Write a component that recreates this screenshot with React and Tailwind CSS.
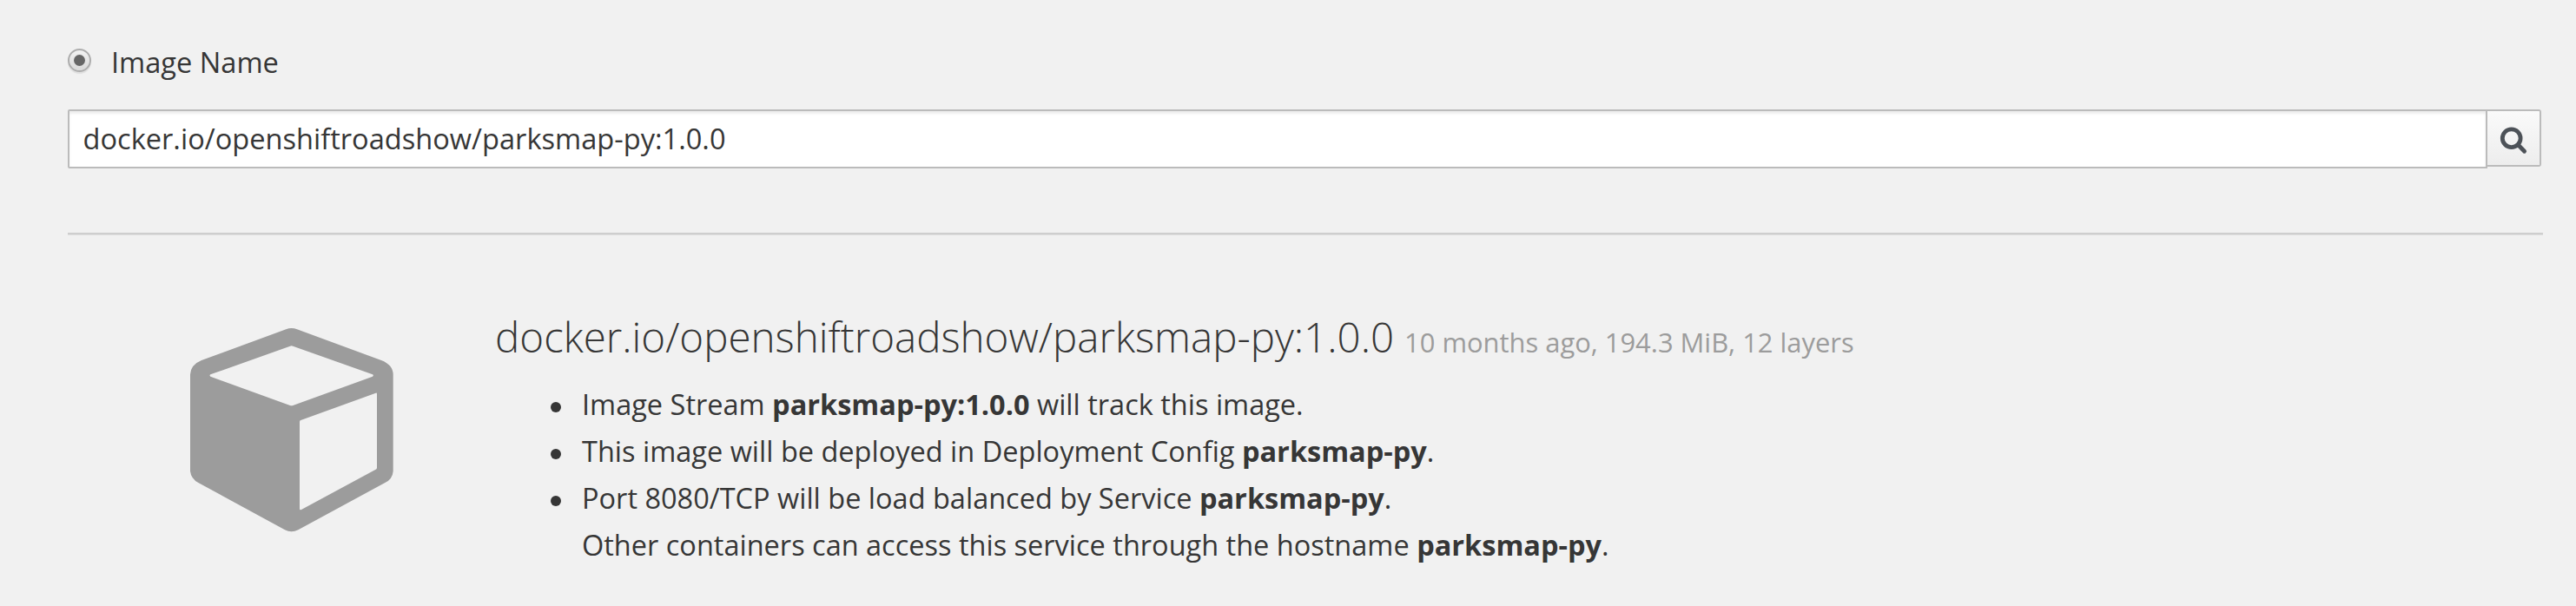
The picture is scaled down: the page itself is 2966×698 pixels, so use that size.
function SearchIcon() {
  return (
    <svg className="block h-[34px] w-[34px]" viewBox="0 0 34 34" fill="none" stroke="#4d5258">
      <circle cx="14.7" cy="14.2" r="10.4" strokeWidth="4.8" />
      <path d="M22.8 22.3 L29.6 29.2" strokeWidth="4.8" strokeLinecap="round" />
    </svg>
  );
}

function CubeIcon() {
  return (
    <svg className="block h-[235px] w-[234px]" viewBox="87 83 702 705">
      <path
        fill="#9c9c9c"
        fillRule="evenodd"
        d="M418 87 Q437 79 456 87 L747 194 Q787 209 788 243 L788 577 Q786 604 760 617 L460 780 Q437 792 414 780 L115 617 Q90 603 87 577 L87 243 Q89 209 126 194 Z
           M432 145 L157 243 Q152 246 157 250 L432 350 Q437 352 442 350 L717 250 Q722 246 717 243 L442 145 Q437 143 432 145 Z
           M469 401 L728 307 Q732 306 732 310 L732 565 Q732 569 728 571 L471 710 Q465 713 465 707 L465 406 Q465 402 469 401 Z"
      />
    </svg>
  );
}

function Item({ bullet = true, children }) {
  return (
    <li className="flex h-[54px] items-center">
      <span className="flex w-[36px] shrink-0 pt-[5px]">
        {bullet && <span className="h-3 w-3 rounded-full bg-[#363636]" />}
      </span>
      <span className="whitespace-pre">{children}</span>
    </li>
  );
}

export default function App() {
  return (
    <main className="h-[698px] w-[2966px] overflow-hidden bg-[#f1f1f1] pt-[45px] pl-[78px] font-['Open_Sans',sans-serif] text-[32.6px] leading-[54px] text-[#363636]">
      <label className="flex h-[54px] items-start">
        <span className="mt-[11px] flex h-[27px] w-[27px] items-center justify-center rounded-full border-[2.5px] border-[#adadad] bg-linear-to-b from-[#f3f3f3] to-[#d9d9d9] shadow-[0_2px_1px_rgba(0,0,0,0.08)]">
          <span className="h-[13px] w-[13px] rounded-full bg-[#666]" />
        </span>
        <span className="ml-[23px]">Image Name</span>
      </label>

      <div className="mt-[27px] flex h-[68px] items-start">
        <div className="flex h-[68px] w-[2786px] items-center rounded-l-[2px] border-2 border-[#bbb] bg-white pl-[15.5px] shadow-[inset_0_3px_3px_rgba(3,3,3,0.075)]">
          <span>docker.io/openshiftroadshow/parksmap-py:1.0.0</span>
        </div>
        <button className="flex h-[66px] w-[62px] items-start rounded-r-[3px] border-2 border-l-0 border-[#bbb] bg-linear-to-b from-[#fafafa] to-[#ededed] pt-[17px] pl-[13px]">
          <SearchIcon />
        </button>
      </div>

      <div className="mt-[74px] h-[3px] w-[2850px] border-b border-[#dedede] bg-[#cecece]" />

      <section className="flex">
        <div className="w-[492px] pt-[107px] pl-[141px]">
          <CubeIcon />
        </div>
        <div className="pt-[84px]">
          <h2 className="flex h-[66px] items-baseline gap-3 whitespace-nowrap text-[47.5px] leading-[66px] font-light">
            docker.io/openshiftroadshow/parksmap-py:1.0.0
            <small className="text-[30.9px] font-normal text-[#9c9c9c]">10 months ago, 194.3 MiB, 12 layers</small>
          </h2>
          <ul className="mt-[18px] pl-[64px] text-[32.5px]">
            <Item>Image Stream <b>parksmap-py:1.0.0</b> will track this image.</Item>
            <Item>This image will be deployed in Deployment Config <b>parksmap-py</b>.</Item>
            <Item>Port 8080/TCP will be load balanced by Service <b>parksmap-py</b>.</Item>
            <Item bullet={false}>Other containers can access this service through the hostname <b>parksmap-py</b>.</Item>
          </ul>
        </div>
      </section>
    </main>
  );
}
